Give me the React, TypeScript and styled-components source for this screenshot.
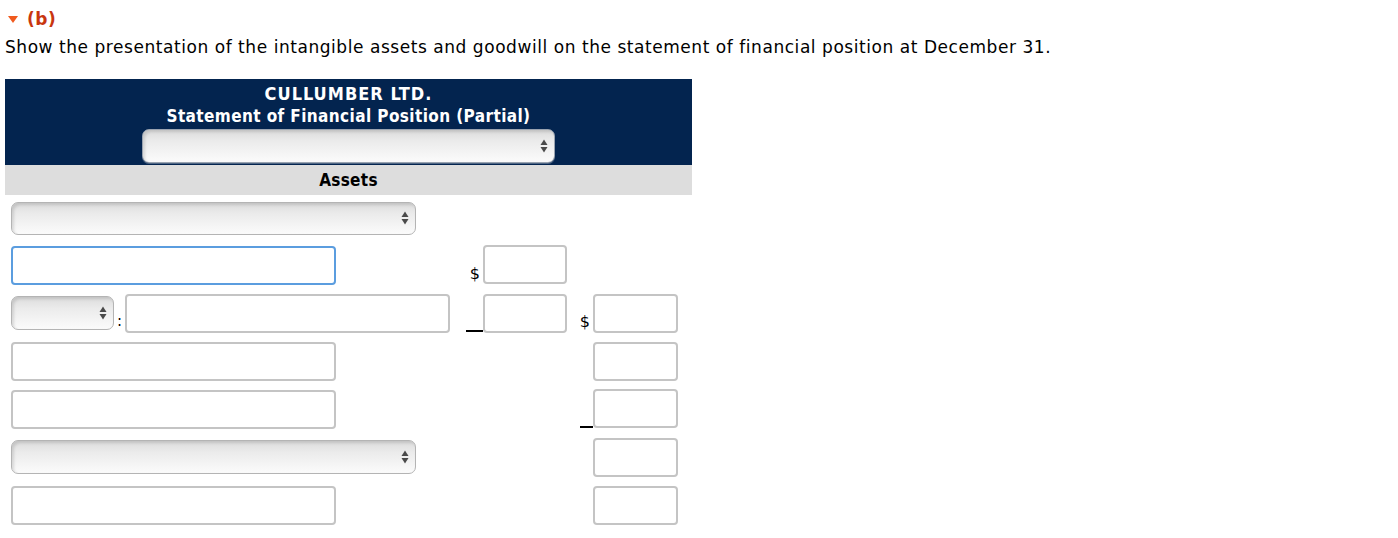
import React from 'react';
import styled, { createGlobalStyle } from 'styled-components';

const GlobalStyle = createGlobalStyle`
  html, body {
    margin: 0;
    padding: 0;
    background: #ffffff;
  }
  body {
    font-family: "DejaVu Sans", Verdana, sans-serif;
    color: #000;
  }
`;

const Page = styled.div`
  padding: 8px 5px 0 5px;
`;

const PartTitle = styled.div`
  display: flex;
  align-items: center;
  gap: 9px;
  padding-left: 3px;
  height: 22px;
  font-size: 17px;
  font-weight: 700;
  letter-spacing: 0.5px;
  color: #c8360f;
`;

const Caret = styled.span`
  width: 0;
  height: 0;
  border-left: 5px solid transparent;
  border-right: 5px solid transparent;
  border-top: 7px solid #f05a1e;
  margin-top: 1px;
`;

const Instruction = styled.p`
  margin: 7px 0 0 0;
  font-size: 17px;
  line-height: 20px;
  letter-spacing: 0.55px;
`;

const Statement = styled.div`
  width: 687px;
  margin-top: 22px;
`;

const Header = styled.div`
  background: #03244f;
  color: #fff;
  display: flex;
  flex-direction: column;
  align-items: center;
  padding: 4px 0 2px 0;
  font-family: "DejaVu Sans Condensed", "DejaVu Sans", sans-serif;
  font-weight: 700;
  font-size: 17px;
  line-height: 22px;
`;

const CompanyName = styled.div`
  font-size: 18px;
  letter-spacing: 1px;
`;

const StatementName = styled.div`
  letter-spacing: 0.4px;
`;

const SectionBand = styled.div`
  background: #dddddd;
  height: 30px;
  display: flex;
  align-items: center;
  justify-content: center;
  font-family: "DejaVu Sans Condensed", "DejaVu Sans", sans-serif;
  font-weight: 700;
  font-size: 17px;
  letter-spacing: 0.3px;
`;

const SelectBox = styled.div<{ $w: number; $h?: number }>`
  box-sizing: border-box;
  width: ${p => p.$w}px;
  height: ${p => p.$h ?? 33}px;
  border: 1px solid #b4b4b4;
  border-radius: 7px;
  background: linear-gradient(to bottom, #dcdcdc 0%, #ebebeb 35%, #f5f5f5 75%, #fbfbfb 100%);
  box-shadow: inset 2px 2px 3px rgba(0, 0, 0, 0.12), 0 1px 0 rgba(255, 255, 255, 0.3);
  display: flex;
  align-items: center;
  justify-content: flex-end;
  padding-right: 6px;
`;

const HeaderSelect = styled(SelectBox)`
  margin-top: 2px;
  border-color: #9aa3b0;
`;

const Arrows = () => (
  <svg width="8" height="14" viewBox="0 0 8 14">
    <path d="M4 0.5 L7.5 6 L0.5 6 Z" fill="#4a4a4a" />
    <path d="M4 13.5 L7.5 8 L0.5 8 Z" fill="#4a4a4a" />
  </svg>
);

const Body = styled.div`
  padding: 0 0 0 6px;
`;

const Row = styled.div<{ $h: number }>`
  display: grid;
  grid-template-columns: 455px 17px 84px 26px 85px;
  height: ${p => p.$h}px;
  align-items: center;
`;

const LeftCell = styled.div`
  display: flex;
  align-items: center;
  gap: 3px;
`;

const Colon = styled.span`
  font-size: 15px;
  align-self: flex-end;
  margin-bottom: 3px;
`;

const TextBox = styled.div<{ $w: number; $focus?: boolean; $lift?: number }>`
  box-sizing: border-box;
  width: ${p => p.$w}px;
  height: 39px;
  border: 2px solid ${p => (p.$focus ? '#5b9ddf' : '#c4c4c4')};
  border-radius: 4px;
  background: #fff;
  margin-bottom: ${p => (p.$lift ?? 0) * 2}px;
`;

const Sign = styled.div<{ $rule?: boolean }>`
  align-self: end;
  height: ${p => (p.$rule ? '0' : 'auto')};
  border-bottom: ${p => (p.$rule ? '2px solid #000' : 'none')};
  margin-bottom: ${p => (p.$rule ? '5px' : '7px')};
  margin-right: ${p => (p.$rule ? '0' : '3px')};
  font-size: 16px;
  line-height: 16px;
  text-align: right;
`;

const Empty = styled.div``;

export default function App() {
  return (
    <>
      <GlobalStyle />
      <Page>
        <PartTitle>
          <Caret />
          (b)
        </PartTitle>
        <Instruction>
          Show the presentation of the intangible assets and goodwill on the statement of financial position at December 31.
        </Instruction>
        <Statement>
          <Header>
            <CompanyName>CULLUMBER LTD.</CompanyName>
            <StatementName>Statement of Financial Position (Partial)</StatementName>
            <HeaderSelect $w={413} $h={34}>
              <Arrows />
            </HeaderSelect>
          </Header>
          <SectionBand>Assets</SectionBand>
          <Body>
            <Row $h={46}>
              <LeftCell>
                <SelectBox $w={405}>
                  <Arrows />
                </SelectBox>
              </LeftCell>
              <Empty />
              <Empty />
              <Empty />
              <Empty />
            </Row>
            <Row $h={48}>
              <LeftCell>
                <TextBox $w={325} $focus />
              </LeftCell>
              <Sign>$</Sign>
              <TextBox $w={84} $lift={1} />
              <Empty />
              <Empty />
            </Row>
            <Row $h={48}>
              <LeftCell>
                <SelectBox $w={103} $h={34}>
                  <Arrows />
                </SelectBox>
                <Colon>:</Colon>
                <TextBox $w={325} />
              </LeftCell>
              <Sign $rule />
              <TextBox $w={84} />
              <Sign>$</Sign>
              <TextBox $w={85} />
            </Row>
            <Row $h={48}>
              <LeftCell>
                <TextBox $w={325} />
              </LeftCell>
              <Empty />
              <Empty />
              <Empty />
              <TextBox $w={85} />
            </Row>
            <Row $h={48}>
              <LeftCell>
                <TextBox $w={325} />
              </LeftCell>
              <Empty />
              <Empty />
              <Sign $rule style={{ marginLeft: 13 }} />
              <TextBox $w={85} $lift={1} />
            </Row>
            <Row $h={48}>
              <LeftCell>
                <SelectBox $w={405} $h={34}>
                  <Arrows />
                </SelectBox>
              </LeftCell>
              <Empty />
              <Empty />
              <Empty />
              <TextBox $w={85} />
            </Row>
            <Row $h={48}>
              <LeftCell>
                <TextBox $w={325} />
              </LeftCell>
              <Empty />
              <Empty />
              <Empty />
              <TextBox $w={85} />
            </Row>
          </Body>
        </Statement>
      </Page>
    </>
  );
}
